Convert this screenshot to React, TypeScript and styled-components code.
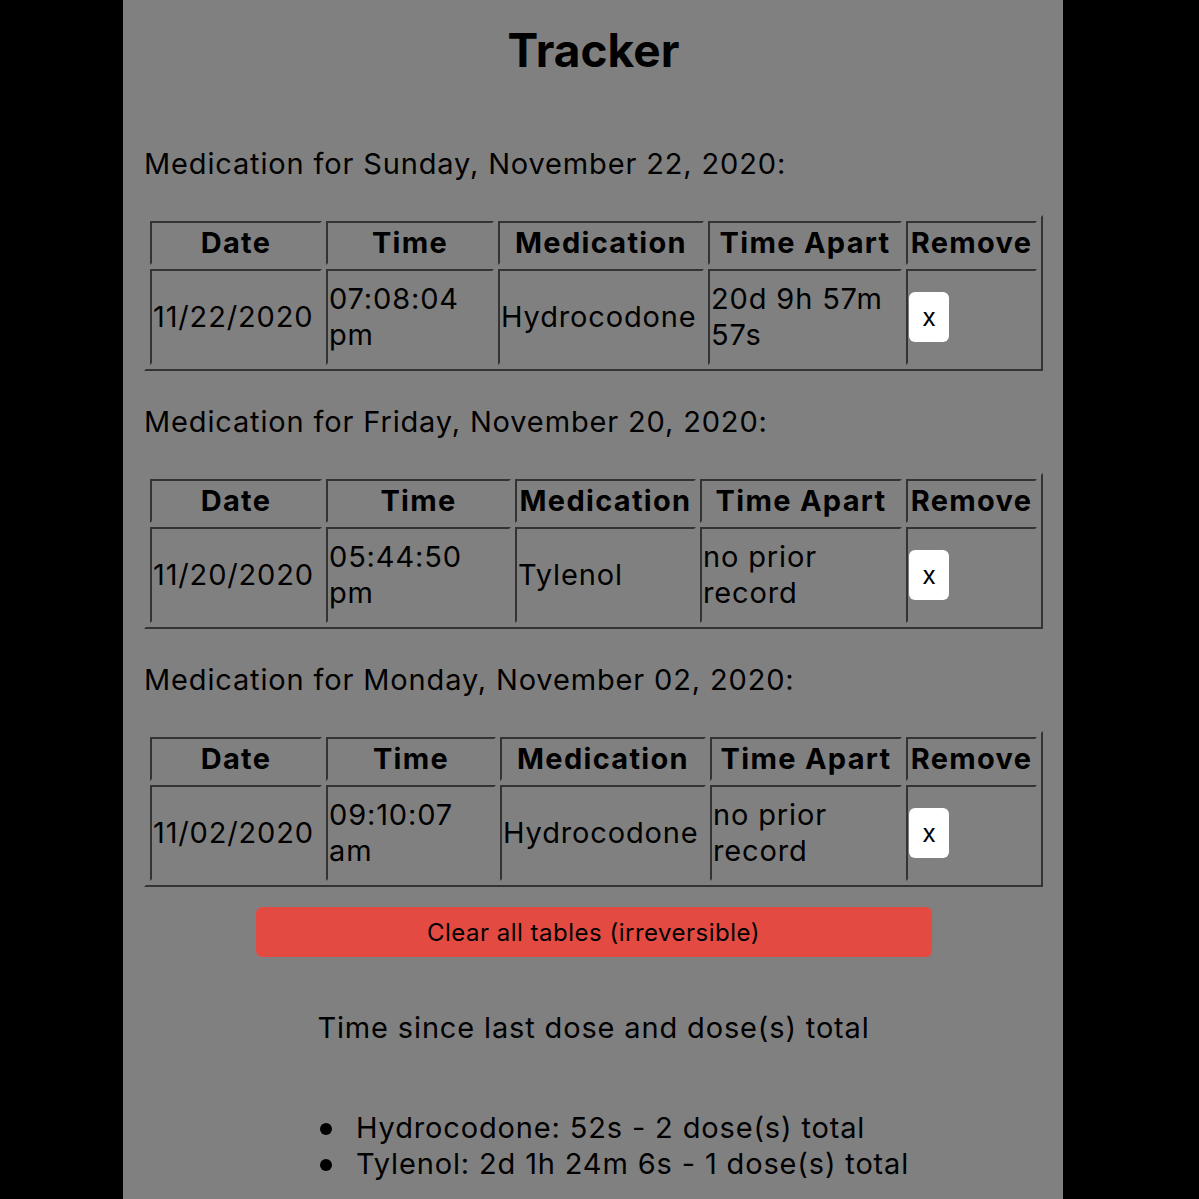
import { Fragment } from 'react'
import styled, { createGlobalStyle } from 'styled-components'

interface Dose {
  date: string;
  time: string;
  medication: string;
  apart: string;
}

interface DayTable {
  label: string;
  widths: number[];
  dose: Dose;
}

const GlobalStyle = createGlobalStyle`
  body {
    margin: 0;
    background: #000000;
    font-family: Inter, "Liberation Sans", sans-serif;
    color: #000000;
  }
`;

const Main = styled.main`
  width: 940px;
  min-height: 1199px;
  margin-left: 123px;
  padding: 22px 20px 0 21px;
  box-sizing: border-box;
  background: #808080;
  letter-spacing: 0.85px;
`;

const Title = styled.h1`
  margin: 0;
  font-size: 46px;
  font-weight: 700;
  line-height: 56px;
  letter-spacing: 0;
  text-align: center;
`;

const DayHeading = styled.p<{ $first?: boolean }>`
  margin: ${(p) => (p.$first ? '68px' : '33px')} 0 33px;
  font-size: 29px;
  line-height: 36px;
`;

const Table = styled.table`
  width: 100%;
  table-layout: fixed;
  border-collapse: separate;
  border-spacing: 4px;
  border: 2px solid;
  border-color: #808080 #333333 #333333 #808080;
`;

const Th = styled.th<{ $w: number }>`
  width: ${(p) => p.$w}px;
  box-sizing: border-box;
  padding: 2px 0;
  border: 2px solid;
  border-color: #333333 #808080 #808080 #333333;
  font-size: 29px;
  font-weight: 700;
  line-height: 36px;
  letter-spacing: 1.3px;
  text-align: center;
  white-space: nowrap;
`;

const Td = styled.td`
  padding: 10px 1px;
  border: 2px solid;
  border-color: #333333 #808080 #808080 #333333;
  font-size: 29px;
  line-height: 36px;
  vertical-align: middle;
`;

const RemoveButton = styled.button`
  width: 40px;
  height: 50px;
  padding: 0;
  border: none;
  border-radius: 6px;
  background: #ffffff;
  color: #000000;
  font-family: Inter, "Liberation Sans", sans-serif;
  font-size: 25px;
  line-height: 26px;
  cursor: pointer;
`;

const ClearButton = styled.button`
  display: block;
  width: 676px;
  height: 50px;
  margin: 20px auto 0;
  border: none;
  border-radius: 6px;
  background: #e34b42;
  color: #000000;
  font-family: Inter, "Liberation Sans", sans-serif;
  font-size: 24px;
  letter-spacing: 0.5px;
  cursor: pointer;
`;

const SummaryTitle = styled.p`
  margin: 53px 0 0;
  font-size: 29px;
  line-height: 36px;
  text-align: center;
`;

const SummaryList = styled.ul`
  margin: 64px 0 0 172px;
  padding-left: 40px;
  list-style: none;
  font-size: 29px;
  line-height: 36px;
`;

const SummaryItem = styled.li`
  &::before {
    content: '';
    display: inline-block;
    width: 12px;
    height: 12px;
    margin: 0 24px 0 -36px;
    border-radius: 50%;
    background: #000000;
    vertical-align: 3px;
  }
`;

const days: DayTable[] = [
  {
    label: 'Medication for Sunday, November 22, 2020:',
    widths: [172, 168, 206, 194, 131],
    dose: { date: '11/22/2020', time: '07:08:04 pm', medication: 'Hydrocodone', apart: '20d 9h 57m 57s' },
  },
  {
    label: 'Medication for Friday, November 20, 2020:',
    widths: [172, 185, 181, 202, 131],
    dose: { date: '11/20/2020', time: '05:44:50 pm', medication: 'Tylenol', apart: 'no prior record' },
  },
  {
    label: 'Medication for Monday, November 02, 2020:',
    widths: [172, 170, 206, 192, 131],
    dose: { date: '11/02/2020', time: '09:10:07 am', medication: 'Hydrocodone', apart: 'no prior record' },
  },
];

const headers = ['Date', 'Time', 'Medication', 'Time Apart', 'Remove'];

const App = () => {
  return (
    <Main>
      <GlobalStyle />
      <Title>Tracker</Title>

      {days.map((day, index) => (
        <Fragment key={day.label}>
          <DayHeading $first={index === 0}>{day.label}</DayHeading>
          <Table>
            <thead>
              <tr>
                {headers.map((h, i) => (
                  <Th key={h} $w={day.widths[i]}>{h}</Th>
                ))}
              </tr>
            </thead>
            <tbody>
              <tr>
                <Td>{day.dose.date}</Td>
                <Td>{day.dose.time}</Td>
                <Td>{day.dose.medication}</Td>
                <Td>{day.dose.apart}</Td>
                <Td>
                  <RemoveButton>x</RemoveButton>
                </Td>
              </tr>
            </tbody>
          </Table>
        </Fragment>
      ))}

      <ClearButton>Clear all tables (irreversible)</ClearButton>

      {/* summary */}
      <SummaryTitle>Time since last dose and dose(s) total</SummaryTitle>
      <SummaryList>
        <SummaryItem>Hydrocodone: 52s - 2 dose(s) total</SummaryItem>
        <SummaryItem>Tylenol: 2d 1h 24m 6s - 1 dose(s) total</SummaryItem>
      </SummaryList>
    </Main>
  );
};

export default App;
